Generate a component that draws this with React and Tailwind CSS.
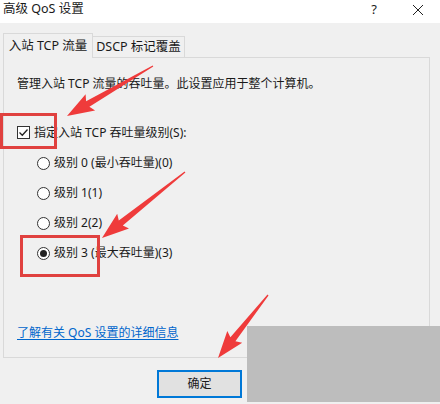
import React from "react";

const LEVELS = [
  { label: "级别 0 (最小吞吐量)(0)", checked: false },
  { label: "级别 1(1)", checked: false },
  { label: "级别 2(2)", checked: false },
  { label: "级别 3 (最大吞吐量)(3)", checked: true },
];

// tail -> tip, thin at the tail and swelling into a head
function arrowPoints(x1, y1, x2, y2) {
  const dx = x2 - x1;
  const dy = y2 - y1;
  const len = Math.hypot(dx, dy);
  const ux = dx / len;
  const uy = dy / len;
  const nx = -uy;
  const ny = ux;
  const headLen = 24;
  const headW = 9.5;
  const neckW = 3.2;
  const bx = x2 - ux * headLen;
  const by = y2 - uy * headLen;
  const pts = [
    [x1 + nx * 0.6, y1 + ny * 0.6],
    [bx + nx * neckW, by + ny * neckW],
    [bx - ux * 3 + nx * headW, by - uy * 3 + ny * headW],
    [x2, y2],
    [bx - ux * 3 - nx * headW, by - uy * 3 - ny * headW],
    [bx - nx * neckW, by - ny * neckW],
    [x1 - nx * 0.6, y1 - ny * 0.6],
  ];
  return pts.map((p) => p.map((v) => v.toFixed(1)).join(",")).join(" ");
}

function Radio({ checked }) {
  return (
    <span className="w-[13px] h-[13px] rounded-full border border-[#333] bg-white flex items-center justify-center shrink-0">
      {checked && <span className="w-[7px] h-[7px] rounded-full bg-[#222]" />}
    </span>
  );
}

export default function App() {
  return (
    <div className="w-[440px] h-[404px] bg-[#f0f0f0] relative overflow-hidden text-[12px] text-[#1a1a1a] font-['Noto_Sans','Noto_Sans_CJK_SC',sans-serif] leading-none">
      {/* title bar */}
      <div className="h-[23px] bg-white flex items-center pl-[3px] text-[13px]">
        <span className="flex-1 -mt-[4px] text-[12.5px]">高级 QoS 设置</span>
        <span className="w-[20px] text-center -mt-[4px] mr-[28px]">?</span>
        <svg width="12" height="12" viewBox="0 0 12 12" className="mr-[16px] -mt-[4px]">
          <path d="M1 1L11 11M11 1L1 11" stroke="#222" strokeWidth="1" />
        </svg>
      </div>

      {/* tabs */}
      <div className="flex items-end pl-[3px] mt-[10px] h-[24px] text-[12.5px]">
        <div className="h-[25px] w-[90px] border border-[#d9d9d9] border-b-0 bg-[#f0f0f0] flex items-center justify-center relative z-10 -mb-px">
          入站 TCP 流量
        </div>
        <div className="h-[21px] w-[92px] border border-[#d9d9d9] border-l-0 border-b-0 flex items-center justify-center">
          DSCP 标记覆盖
        </div>
      </div>

      {/* panel */}
      <div className="ml-[3px] w-[427px] h-[301px] border border-[#d9d9d9] flex flex-col pl-[13px]">
        <div className="mt-[19px] h-[14px] flex items-center">
          管理入站 TCP 流量的吞吐量。此设置应用于整个计算机。
        </div>
        <div className="mt-[35px] flex items-center gap-[4px]">
          <span className="w-[13px] h-[13px] border border-[#333] bg-white flex items-center justify-center shrink-0">
            <svg width="11" height="11" viewBox="0 0 11 11">
              <path d="M1.5 5.5L4.3 8.3L9.5 2.5" fill="none" stroke="#222" strokeWidth="1.3" />
            </svg>
          </span>
          <span>指定入站 TCP 吞吐量级别(S):</span>
        </div>
        <div className="flex flex-col gap-[16px] mt-[17px] pl-[20px]">
          {LEVELS.map((l) => (
            <div key={l.label} className="flex items-center gap-[4px] h-[14px]">
              <Radio checked={l.checked} />
              <span>{l.label}</span>
            </div>
          ))}
        </div>
        <div className="mt-auto mb-[18px]">
          <span className="text-[#0066cc] underline underline-offset-2">了解有关 QoS 设置的详细信息</span>
        </div>
      </div>

      {/* footer */}
      <div className="flex pl-[157px] mt-[12px]">
        <button className="w-[85px] h-[28px] bg-[#e1e1e1] border-2 border-[#0078d7] flex items-center justify-center">
          确定
        </button>
      </div>

      {/* grey cover */}
      <div className="absolute left-[247px] top-[326px] w-[193px] h-[76px] bg-[#bdbdbd]" />

      {/* red annotation boxes */}
      <div className="absolute left-0 top-[113px] w-[57px] h-[36px] border-[3px] border-[#e0413f]" />
      <div className="absolute left-[20px] top-[235px] w-[80px] h-[42px] border-[3px] border-[#e0413f]" />

      {/* arrows */}
      <svg className="absolute inset-0 pointer-events-none" width="440" height="404">
        <polygon points={arrowPoints(153, 66, 67, 116)} fill="#ef3b3b" />
        <polygon points={arrowPoints(185, 172, 102, 238)} fill="#ef3b3b" />
        <polygon points={arrowPoints(268, 295, 218, 358)} fill="#ef3b3b" />
      </svg>
    </div>
  );
}
